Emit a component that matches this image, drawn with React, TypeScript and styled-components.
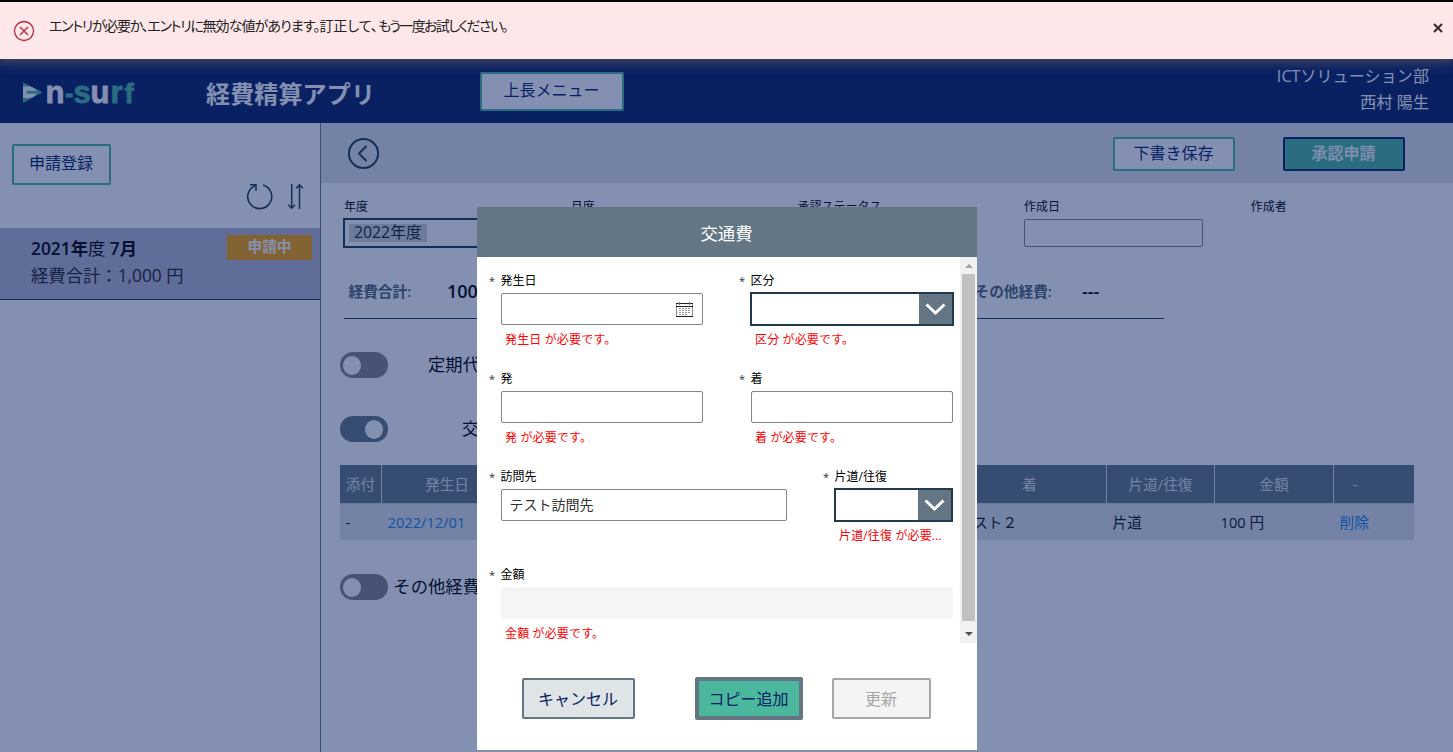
import React from 'react';
import styled, { createGlobalStyle, css } from 'styled-components';

const navy = '#092163';
const teal = '#4bb89e';
const slate = '#647683';
const ink = '#213a4c';
const pale = '#dfe4e6';
const sans = "'Open Sans', 'Noto Sans CJK JP', sans-serif";

const Global = createGlobalStyle`
  *, *::before, *::after { box-sizing: border-box; }
  body { margin: 0; background: #fff; font-family: ${sans}; color: #000; }
  button, input { font-family: inherit; margin: 0; }
`;

const Page = styled.div`
  position: relative; width: 1453px; height: 752px; overflow: hidden;
  display: flex; flex-direction: column; background: #fff;
`;

/* header */
const Header = styled.header`
  height: 123px; background: ${navy}; padding: 59px 24px 0 22px;
  display: flex; flex: none; align-items: flex-start;
`;
const Logo = styled.svg`display: block; width: 120px; height: 50px; margin-top: 9px; flex: none;`;
const AppTitle = styled.h1`
  margin: 17px 0 0 64px; width: 274px; font-size: 24px; line-height: 36px; font-weight: 700; color: #fff;
  letter-spacing: 0.15px;
`;
const User = styled.div`
  margin-left: auto; margin-top: 4px; text-align: right; color: #fff; font-size: 16px; line-height: 26px;
  letter-spacing: 0.1px;
`;

type BtnProps = { $w: number; $h: number; $border: string; $bg?: string; $fg?: string; $bw?: number; $lift?: number; $strong?: boolean };
const Button = styled.button<BtnProps>`
  width: ${p => p.$w}px; height: ${p => p.$h}px; flex: none;
  border: ${p => p.$bw ?? 2}px solid ${p => p.$border}; border-radius: 2px;
  background: ${p => p.$bg ?? '#fff'}; color: ${p => p.$fg ?? navy};
  font-size: 16px; line-height: 20px; padding: 0 1px ${p => p.$lift ?? 0}px 0; white-space: nowrap;
  ${p => p.$strong && css`-webkit-text-stroke: 0.3px currentColor;`}
`;
const MenuSlot = styled.div`margin-top: 13px; display: flex;`;

/* body */
const Body = styled.div`flex: 1; display: flex; min-height: 0;`;
const Side = styled.aside`width: 321px; border-right: 1px solid ${slate}; flex: none;`;
const SideTop = styled.div`height: 105px; padding: 21px 16px 0 12px;`;
const SideIcons = styled.div`display: flex; justify-content: flex-end; gap: 14px; height: 28px; margin-top: -3px;`;
const Item = styled.div`
  height: 72px; background: #b5b9cd; border-bottom: 1px solid ${ink};
  padding: 7px 8px 0 31px; display: flex; justify-content: space-between; font-size: 17.33px;
`;
const ItemText = styled.div`line-height: 27px; white-space: nowrap;`;
const ItemName = styled.div`font-weight: 600; span { font-weight: 400; }`;
const ItemTotal = styled.div`color: #222;`;
const Badge = styled.div`
  width: 85px; height: 25px; background: #ffa500; color: #fff; font-weight: 700; font-size: 14.67px;
  line-height: 23px; text-align: center; flex: none;
`;

const Main = styled.main`flex: 1; min-width: 0;`;
const Toolbar = styled.div`
  height: 60px; background: ${pale}; display: flex; align-items: center; padding: 0 48px 0 26px;
`;
const Push = styled.div`margin-left: auto; display: flex; gap: 48px; padding-top: 2px;`;

const Meta = styled.div`display: flex; padding: 14px 0 0 23px; height: 86px;`;
const MetaCol = styled.div`width: 226.7px; flex: none; font-size: 12px;`;
const MetaLabel = styled.div`line-height: 20px; height: 21px; white-space: nowrap;`;
const Combo = styled.div`
  width: 179px; height: 30px; margin-left: -1px; border: 2px solid ${ink}; padding: 4px 0 0 4px; display: flex;
`;
const Chip = styled.span`
  background: #d0d4d8; height: 18px; padding: 0 5px; font-size: 15.8px; line-height: 17px; color: #222;
`;
const DateBox = styled.div`width: 179px; height: 28px; margin-top: 1px; border: 1px solid #858585; border-radius: 2px;`;

const Summary = styled.div`
  margin-left: 23px; width: 820px; height: 50px; border-bottom: 1px solid ${ink};
  display: flex; padding: 10px 0 0 4.5px; line-height: 24px; white-space: nowrap;
`;
const SumPair = styled.div<{ $w: number }>`width: ${p => p.$w}px; display: flex; flex: none;`;
const SumLabel = styled.span<{ $w: number }>`width: ${p => p.$w}px; font-size: 14.67px; font-weight: 600; color: #506574;`;
const SumValue = styled.span`font-size: 18px; font-weight: 600;`;

const ToggleRow = styled.div<{ $top: number }>`
  margin: ${p => p.$top}px 0 0 19px; height: 26px; display: flex; align-items: flex-start;
`;
const Track = styled.div<{ $on?: boolean }>`
  width: 48px; height: 26px; border-radius: 13px; padding: 0 3px; flex: none;
  background: ${p => (p.$on ? slate : '#858585')};
  display: flex; align-items: center; justify-content: ${p => (p.$on ? 'flex-end' : 'flex-start')};
  ${p => p.$on && css`padding-right: 5px;`}
`;
const Knob = styled.div`width: 18px; height: 19px; border-radius: 50%; background: #fff;`;
const ToggleText = styled.div<{ $w: number }>`
  width: ${p => p.$w}px; text-align: right; font-size: 17.33px; line-height: 24px; white-space: nowrap; flex: none;
`;

const cols = '42px 131px 220px 220px 154px 108px 119px 80px';
const Table = styled.div`margin: 23px 0 0 19px; width: 1074px; font-size: 14.67px;`;
const HeadRow = styled.div`display: grid; grid-template-columns: ${cols}; height: 38px; background: ${slate};`;
const HeadCell = styled.div<{ $left?: number }>`
  color: ${pale}; line-height: 38px; text-align: center; border-right: 1px solid #dfe4e6;
  ${p => p.$left !== undefined && css`text-align: left; padding-left: ${p.$left}px;`}
  &:last-child { border-right: 0; }
`;
const Row = styled(HeadRow)`background: ${pale}; height: 37px; border-top: 1px solid #ccd1d5;`;
const Cell = styled.div<{ $link?: boolean }>`
  padding-left: 5.5px; line-height: 36px; white-space: nowrap; color: ${p => (p.$link ? '#1783e3' : '#111')};
`;

/* overlay layers */
const Scrim = styled.div`position: absolute; inset: 0; background: rgba(9, 33, 99, 0.5);`;
const Notice = styled.div`
  position: absolute; left: 0; right: 0; top: 0; height: 59px; border-top: 2px solid #000;
  background: #fee7e8; box-shadow: 0 0 12px 2px rgba(110, 100, 90, 0.75);
  display: flex; padding: 0 10px 0 13px;
`;
const NoticeText = styled.div`
  margin: 13px 0 0 14px; font-size: 14px; line-height: 22px; color: #222; white-space: nowrap;
  font-feature-settings: 'palt'; flex: 1;
`;
const Phrase = styled.span<{ $track: number }>`letter-spacing: ${p => p.$track}px;`;
const NoticeIcon = styled.svg`width: 22px; height: 22px; margin-top: 18px; flex: none;`;
const NoticeClose = styled.svg`width: 10px; height: 10px; margin-top: 21px; flex: none;`;

const Dialog = styled.section`
  position: absolute; left: 477px; top: 207px; width: 500px; height: 543px; background: #fff;
  display: flex; flex-direction: column;
`;
const DialogHead = styled.h2`
  margin: 0; height: 50px; background: ${slate}; color: #fff; text-align: center; padding-right: 1px;
  font-size: 17.33px; font-weight: 400; line-height: 52px; flex: none;
`;
const DialogBody = styled.div`display: flex; height: 386px; flex: none;`;
const Form = styled.div`flex: 1; padding: 14px 0 0 12px; overflow: hidden;`;
const FormRow = styled.div`display: flex; gap: 36px; height: 98px;`;
const FieldBox = styled.div<{ $w: number }>`width: ${p => p.$w}px; padding-left: 12px; flex: none;`;
const Label = styled.label`
  display: flex; font-size: 12px; line-height: 19px; height: 22px; margin-left: -12px; white-space: nowrap;
  &::before { content: '*'; width: 11.5px; font-size: 11px; line-height: 20px; color: #333; }
`;
const Input = styled.div<{ $off?: boolean }>`
  height: 32px; border: 1px solid #858585; border-radius: 2px; background: #fff;
  display: flex; align-items: center; padding: 0 9px 2px 7.5px; font-size: 14px; color: #333;
  ${p => p.$off && css`background: #f4f5f7; border-color: #f4f5f7; border-radius: 3px;`}
  svg { margin: 3px 0 0 auto; }
`;
const Select = styled.div`
  height: 34px; margin: -1px -1px; border: 2px solid ${ink}; display: flex; justify-content: flex-end;
`;
const Caret = styled.div`
  width: 33px; background: ${slate}; display: flex; align-items: center; justify-content: center;
`;
const ErrorText = styled.div`
  margin: 6px 10px 0 4px; font-size: 12px; line-height: 18px; color: #f00; white-space: nowrap;
  overflow: hidden; text-overflow: ellipsis; letter-spacing: 0.15px;
`;
const ScrollTrack = styled.div`
  width: 17px; background: #f1f1f1; display: flex; flex-direction: column; align-items: center; flex: none;
`;
const Thumb = styled.div`width: 13px; height: 347px; background: #c1c1c1;`;
const Arrow = styled.div<{ $down?: boolean }>`
  height: ${p => (p.$down ? 22 : 17)}px; display: flex; align-items: center;
  &::before {
    content: ''; border: 4px solid transparent;
    ${p => (p.$down
      ? css`border-top-color: #505050; border-bottom: 0; margin-top: 3px;`
      : css`border-bottom-color: #a3a3a3; border-top: 0;`)}
  }
`;
const Actions = styled.div`display: flex; align-items: center; padding: 4px 0 0 45px; height: 107px;`;
const Gap = styled.div<{ $w: number }>`width: ${p => p.$w}px; flex: none;`;

const CaretIcon = () => (
  <Caret>
    <svg width="21" height="14" viewBox="0 0 21 14" fill="none" stroke="#fff" strokeWidth="2.9">
      <path d="M1.5 2.5 L10.5 11 L19.5 2.5" />
    </svg>
  </Caret>
);

const CalendarIcon = () => (
  <svg width="17" height="16" viewBox="0 0 17 16" fill="none" stroke="#555">
    <path d="M.5 1.5V14.5M16.5 1.5V14.5" stroke="#888" />
    <path d="M0 1.5H17M0 4.5H17M0 14.5H17" stroke="#222" />
    <path d="M3.5 0V3M13.5 0V3" stroke="#777" />
    <path d="M3 6.5H15M3 8.5H15M3 10.5H15M3 12.5H12" stroke="#999" strokeDasharray="2 1" />
  </svg>
);

const Field = ({ label, w, error, children }: { label: string; w: number; error?: string; children: React.ReactNode }) => (
  <FieldBox $w={w}>
    <Label>{label}</Label>
    {children}
    {error && <ErrorText>{error}</ErrorText>}
  </FieldBox>
);

export default function App() {
  return (
    <Page>
      <Global />
      <Header>
        <Logo viewBox="0 -10 120 50">
          <path d="M1 4.5 L20.5 14.3 L1 25 Z" fill={teal} />
          <path d="M1 8.5 H6 C11 8.5 14 11 16 14 C14 17 11 20 6 20 H1 Z" fill="#fff" />
          <path d="M5 12.8 H17.5 V15.8 H5 Q3.5 14.3 5 12.8 Z" fill={teal} />
          <g fontFamily="Liberation Sans" fontWeight="700" fontSize="31" strokeWidth="0.8">
            <text x="23.5" y="25" fill="#fff" stroke="#fff">n</text>
            <text x="43" y="24" fill={teal} stroke={teal} fontSize="25">-</text>
            <text x="51.5" y="25" fill={teal} stroke={teal}>s</text>
            <text x="68.5" y="25" fill="#fff" stroke="#fff">u</text>
            <text x="88.5" y="25" fill={teal} stroke={teal}>r</text>
            <text x="102.5" y="25" fill={teal} stroke={teal} fontSize="28">f</text>
          </g>
        </Logo>
        <AppTitle>経費精算アプリ</AppTitle>
        <MenuSlot><Button $w={144} $h={39} $border={teal} $lift={3}>上長メニュー</Button></MenuSlot>
        <User>
          <div>ICTソリューション部</div>
          <div>西村 陽生</div>
        </User>
      </Header>

      <Body>
        <Side>
          <SideTop>
            <Button $w={99} $h={41} $border={teal} $lift={4}>申請登録</Button>
            <SideIcons>
              <svg width="27" height="28" viewBox="0 0 27 28" fill="none" stroke={ink} strokeWidth="1.6">
                <path d="M17 3.1 A12 12 0 1 1 9.5 3.4" />
                <path d="M4 2.7 H10 V8.7" />
              </svg>
              <svg width="17" height="28" viewBox="0 0 17 28" fill="none" stroke={ink} strokeWidth="1.5">
                <path d="M4.7 2 V26 M1.2 22.8 L4.7 26.2 L8 22.8" />
                <path d="M12.5 27 V3 M9 6.3 L12.5 2.9 L16 6.3" />
              </svg>
            </SideIcons>
          </SideTop>
          <Item>
            <ItemText>
              <ItemName>2021年<span>度</span> 7月</ItemName>
              <ItemTotal>経費合計：1,000 円</ItemTotal>
            </ItemText>
            <Badge>申請中</Badge>
          </Item>
        </Side>

        <Main>
          <Toolbar>
            <svg width="33" height="33" viewBox="0 0 33 33" fill="none" stroke={ink} strokeWidth="2">
              <circle cx="16.5" cy="16.5" r="14.6" />
              <path d="M19.5 9 L12 16.5 L19.5 24" />
            </svg>
            <Push>
              <Button $w={122} $h={34} $border={teal} $lift={2}>下書き保存</Button>
              <Button $w={122} $h={34} $border={navy} $bg={teal} $fg="#fff" $strong $lift={2}>承認申請</Button>
            </Push>
          </Toolbar>
          <Meta>
            <MetaCol><MetaLabel>年度</MetaLabel><Combo><Chip>2022年度</Chip></Combo></MetaCol>
            <MetaCol><MetaLabel>月度</MetaLabel></MetaCol>
            <MetaCol><MetaLabel>承認ステータス</MetaLabel></MetaCol>
            <MetaCol><MetaLabel>作成日</MetaLabel><DateBox /></MetaCol>
            <MetaCol><MetaLabel>作成者</MetaLabel></MetaCol>
          </Meta>
          <Summary>
            <SumPair $w={626}><SumLabel $w={98.5}>経費合計:</SumLabel><SumValue>100 円</SumValue></SumPair>
            <SumPair $w={180}><SumLabel $w={107.5}>その他経費:</SumLabel><SumValue>---</SumValue></SumPair>
          </Summary>
          <ToggleRow $top={33}><Track><Knob /></Track><ToggleText $w={92}>定期代</ToggleText></ToggleRow>
          <ToggleRow $top={38}><Track $on><Knob /></Track><ToggleText $w={126}>交通費</ToggleText></ToggleRow>
          <Table>
            <HeadRow>
              <HeadCell>添付</HeadCell><HeadCell>発生日</HeadCell><HeadCell /><HeadCell />
              <HeadCell>着</HeadCell><HeadCell>片道/往復</HeadCell><HeadCell>金額</HeadCell><HeadCell $left={19}>-</HeadCell>
            </HeadRow>
            <Row>
              <Cell>-</Cell><Cell $link>2022/12/01</Cell><Cell /><Cell />
              <Cell>テスト２</Cell><Cell>片道</Cell><Cell>100 円</Cell><Cell $link>削除</Cell>
            </Row>
          </Table>
          <ToggleRow $top={34}><Track><Knob /></Track><ToggleText $w={92}>その他経費</ToggleText></ToggleRow>
        </Main>
      </Body>

      <Scrim />

      <Notice role="alert">
        <NoticeIcon viewBox="0 0 22 22" fill="none" stroke="#b52a38" strokeWidth="1.3">
          <circle cx="11" cy="11" r="9.5" />
          <path d="M7 7 L15 15 M15 7 L7 15" />
        </NoticeIcon>
        <NoticeText>
          <Phrase $track={-1.3}>エントリが必要か、エントリに</Phrase>
          <Phrase $track={-0.9}>無効な値があります。</Phrase>
          <Phrase $track={0}>訂正して、</Phrase>
          <Phrase $track={-1.6}>もう一度お試しください。</Phrase>
        </NoticeText>
        <NoticeClose viewBox="0 0 10 10" stroke="#333" strokeWidth="2.2"><path d="M1 1 L9 9 M9 1 L1 9" /></NoticeClose>
      </Notice>

      <Dialog>
        <DialogHead>交通費</DialogHead>
        <DialogBody>
          <Form>
            <FormRow>
              <Field label="発生日" w={214} error="発生日 が必要です。"><Input><CalendarIcon /></Input></Field>
              <Field label="区分" w={214} error="区分 が必要です。"><Select><CaretIcon /></Select></Field>
            </FormRow>
            <FormRow>
              <Field label="発" w={214} error="発 が必要です。"><Input /></Field>
              <Field label="着" w={214} error="着 が必要です。"><Input /></Field>
            </FormRow>
            <FormRow>
              <Field label="訪問先" w={298}><Input>テスト訪問先</Input></Field>
              <Field label="片道/往復" w={129} error="片道/往復 が必要..."><Select><CaretIcon /></Select></Field>
            </FormRow>
            <FormRow>
              <Field label="金額" w={464} error="金額 が必要です。"><Input $off /></Field>
            </FormRow>
          </Form>
          <ScrollTrack><Arrow /><Thumb /><Arrow $down /></ScrollTrack>
        </DialogBody>
        <Actions>
          <Button $w={113} $h={41} $border={slate} $bg={pale}>キャンセル</Button>
          <Gap $w={60} />
          <Button $w={108} $h={43} $bw={4} $border={slate} $bg={teal}>コピー追加</Button>
          <Gap $w={29} />
          <Button $w={99} $h={41} $border="#a6a6a6" $bg="#f4f4f4" $fg="#a6a6a6">更新</Button>
        </Actions>
      </Dialog>
    </Page>
  );
}
